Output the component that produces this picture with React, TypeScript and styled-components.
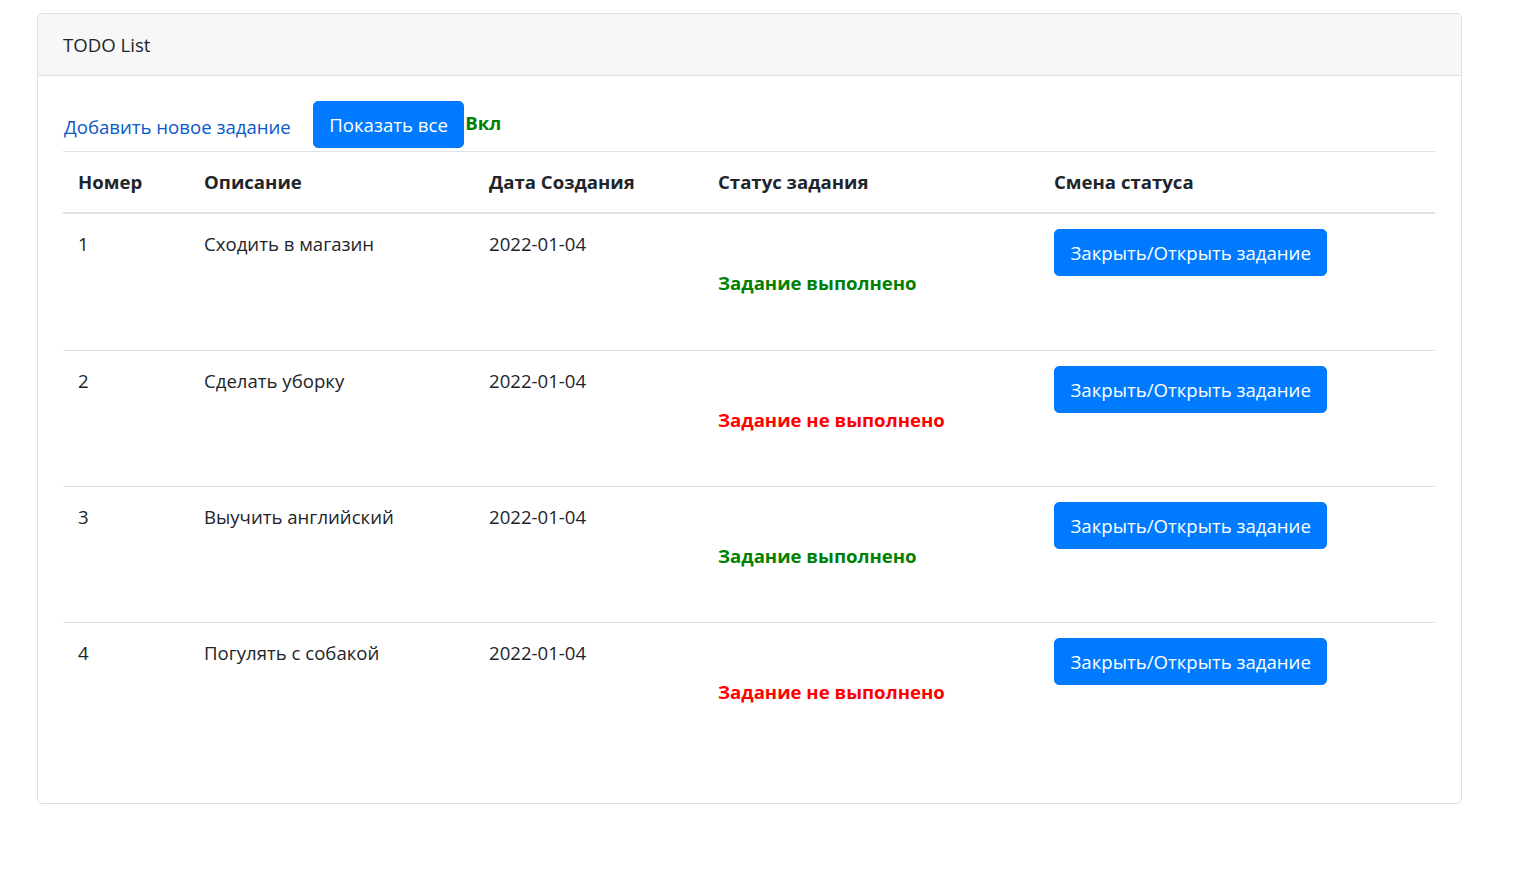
import React from "react";
import styled, { createGlobalStyle } from "styled-components";

const GlobalStyle = createGlobalStyle`
  html, body { margin: 0; padding: 0; background: #fff; }
  body {
    font-family: "Open Sans", "Noto Sans", Arial, sans-serif;
    font-size: 18.6px;
    line-height: 30px;
    color: #212529;
  }
  * { box-sizing: border-box; }
`;

const Page = styled.div`
  padding: 13px 0 0 37px;
`;

const Card = styled.div`
  width: 1425px;
  border: 1px solid #dfdfdf;
  border-radius: 5px;
  background: #fff;
  overflow: hidden;
`;

const CardHeader = styled.div`
  padding: 16px 25px 15px;
  background: #f7f7f7;
  border-bottom: 1px solid #dfdfdf;
  line-height: 30px;
`;

const CardBody = styled.div`
  padding: 25px 26px 25px 25px;
`;

const Toolbar = styled.div`
  display: flex;
  align-items: flex-start;
  height: 50px;
`;

const AddLink = styled.a`
  color: #0a58ca;
  text-decoration: none;
  margin: 11px 22px 0 1px;
  cursor: pointer;
`;

const PrimaryButton = styled.button`
  font-family: inherit;
  font-size: 18.6px;
  line-height: 30px;
  padding: 7.5px 15.5px;
  color: #fff;
  background: #007bff;
  border: 1px solid #007bff;
  border-radius: 5px;
  cursor: pointer;
  white-space: nowrap;
`;

const Toggle = styled.b`
  color: #008000;
  margin-top: 7px;
  margin-left: 1px;
  font-weight: 700;
`;

const Table = styled.table`
  width: 100%;
  border-collapse: separate;
  border-spacing: 0;
  margin-bottom: 20px;
  table-layout: fixed;
`;

const Th = styled.th`
  text-align: left;
  font-weight: 700;
  padding: 15px;
  border-top: 1px solid #dee2e6;
  border-bottom: 2px solid #dee2e6;
  vertical-align: bottom;
`;

const Row = styled.tr`
  height: 136px;
  &:first-child td { border-top: none; }
`;

const Td = styled.td`
  padding: 15px;
  border-top: 1px solid #dee2e6;
  vertical-align: top;
`;

const Status = styled.b<{ $done: boolean }>`
  display: block;
  margin-top: 39px;
  font-weight: 700;
  color: ${(p) => (p.$done ? "#008000" : "#ff0000")};
`;

const tasks = [
  { id: 1, text: "Сходить в магазин", date: "2022-01-04", done: true },
  { id: 2, text: "Сделать уборку", date: "2022-01-04", done: false },
  { id: 3, text: "Выучить английский", date: "2022-01-04", done: true },
  { id: 4, text: "Погулять с собакой", date: "2022-01-04", done: false },
];

export default function App() {
  return (
    <>
      <GlobalStyle />
      <Page>
        <Card>
          <CardHeader>TODO List</CardHeader>
          <CardBody>
            <Toolbar>
              <AddLink>Добавить новое задание</AddLink>
              <PrimaryButton>Показать все</PrimaryButton>
              <Toggle>Вкл</Toggle>
            </Toolbar>
            <Table>
              <colgroup>
                <col style={{ width: 126 }} />
                <col style={{ width: 285 }} />
                <col style={{ width: 229 }} />
                <col style={{ width: 336 }} />
                <col />
              </colgroup>
              <thead>
                <tr>
                  <Th>Номер</Th>
                  <Th>Описание</Th>
                  <Th>Дата Создания</Th>
                  <Th>Статус задания</Th>
                  <Th>Смена статуса</Th>
                </tr>
              </thead>
              <tbody>
                {tasks.map((t) => (
                  <Row key={t.id}>
                    <Td>{t.id}</Td>
                    <Td>{t.text}</Td>
                    <Td>{t.date}</Td>
                    <Td>
                      <Status $done={t.done}>
                        {t.done ? "Задание выполнено" : "Задание не выполнено"}
                      </Status>
                    </Td>
                    <Td>
                      <PrimaryButton>Закрыть/Открыть задание</PrimaryButton>
                    </Td>
                  </Row>
                ))}
              </tbody>
            </Table>
          </CardBody>
        </Card>
      </Page>
    </>
  );
}
